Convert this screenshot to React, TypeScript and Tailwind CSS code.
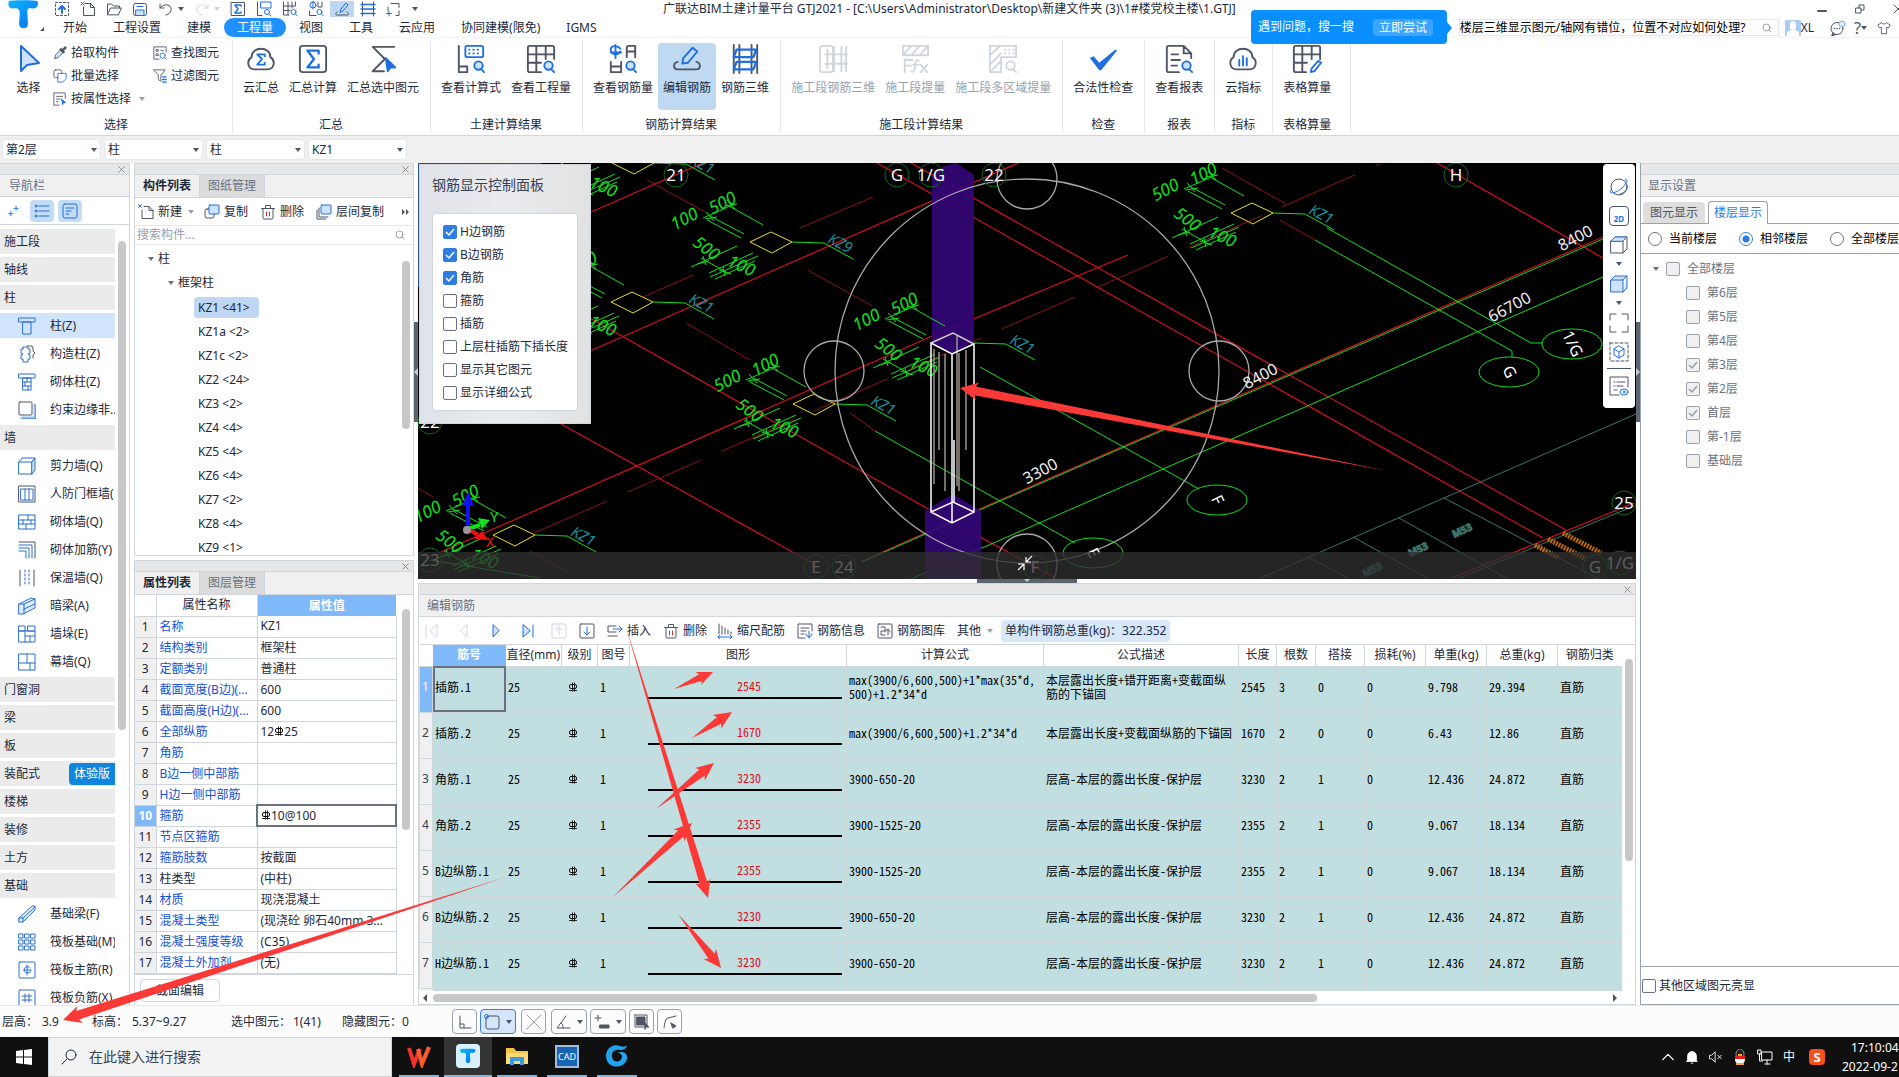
import React, { useState } from "react";

interface IconProps {
  size?: string;
  box?: number;
  color?: string;
  children: React.ReactNode;
}

const Icon: React.FC<IconProps> = ({ size = "w-4 h-4", box = 16, color = "text-[#4f5563]", children }) => (
  <svg
    className={`${size} ${color} shrink-0`}
    viewBox={`0 0 ${box} ${box}`}
    fill="none"
    stroke="currentColor"
    strokeWidth={box > 24 ? 2 : 1}
    strokeLinecap="round"
    strokeLinejoin="round"
  >
    {children}
  </svg>
);

const BLUE = "#1f6fe0";
const PALE = "#cfe2fb";

const Caret: React.FC<{ className?: string }> = ({ className = "text-gray-600" }) => (
  <svg className={`w-[6px] h-[4px] shrink-0 ${className}`} viewBox="0 0 6 4" fill="currentColor">
    <path d="M0 0h6L3 4z" />
  </svg>
);

const CloseX: React.FC = () => (
  <svg className="w-[7px] h-[7px]" viewBox="0 0 7 7" stroke="#8a8a8a" strokeWidth={1}>
    <path d="M0.5 0.5l6 6M6.5 0.5l-6 6" />
  </svg>
);

const RebarMark: React.FC = () => (
  <svg className="inline-block w-[10px] h-[10px] align-baseline" viewBox="0 0 10 10" fill="none" stroke="#111" strokeWidth={1}>
    <rect x="1.5" y="2.5" width="7" height="4" rx="1.5" />
    <path d="M4.5 0.5v9M6.500 0.5v9M1 8.500h8" strokeWidth={0.900} />
  </svg>
);

const TLogo: React.FC<{ className: string; id: string }> = ({ className, id }) => (
  <svg className={className} viewBox="0 0 30 28">
    <defs>
      <linearGradient id={id} x1="0" y1="0" x2="1" y2="1">
        <stop offset="0" stopColor="#12b4fa" />
        <stop offset="0.6" stopColor="#0a8cf5" />
        <stop offset="1" stopColor="#0868e8" />
      </linearGradient>
    </defs>
    <path
      d="M1 1C5 0 24 0 28 1C30 3 29 7 26 8C23 9 20 7 19 9C18 12 20 21 19 25C18 28 12 28 11 25C10 20 13 12 10 9C8 7 5 9 3 8C0 7 0 3 1 1Z"
      fill={`url(#${id})`}
    />
  </svg>
);

/* ---------- Title bar and menu ---------- */

const quickIcons: { id: string; label: string; active?: boolean; art: React.ReactNode }[] = [
  { id: "upload", label: "导入", art: (<><path strokeDasharray="2 2" d="M1.5 1.5h13v13h-13z" /><path stroke={BLUE} strokeWidth={2} d="M8 12V5M5 8l3-3 3 3" /></>) },
  { id: "new", label: "新建工程", art: (<><path d="M5 2.5h5.500l4 4v8h-11V6" /><path d="M10.500 2.500v4h4" /><path stroke={BLUE} d="M1 1l3 3M4 1L1 4" /></>) },
  { id: "open", label: "打开", art: <path d="M1.500 13.500V3h4l2 2h6v2M1.500 13.500L4.500 7h11l-3 6.500z" /> },
  { id: "save", label: "保存", art: (<><rect x="1.500" y="2.500" width="13" height="12" rx="2" /><path stroke={BLUE} fill={PALE} d="M4 9h8v5.500H4z" /><path stroke={BLUE} d="M5 5.500h6" /></>) },
];

const quickIconsMore: { id: string; label: string; active?: boolean; art: React.ReactNode }[] = [
  { id: "sum", label: "汇总", art: (<><rect x="1.500" y="1.500" width="13" height="13" /><path stroke={BLUE} strokeWidth={1.500} d="M11 5V4H5l3 4-3 4h6v-1" /></>) },
  { id: "formula", label: "计算式", art: (<><path d="M1.500 1v13.500H6" /><rect stroke={BLUE} x="5" y="1" width="10" height="6" /><circle stroke={BLUE} cx="11" cy="11" r="2.500" /><path stroke={BLUE} d="M13 13l2 2" /></>) },
  { id: "quantity", label: "工程量", art: (<><path d="M1.500 1v13H7M1.500 5h12V1M1.500 9.500H8M6 1v13M10 1v6" /><circle stroke={BLUE} cx="11.500" cy="11" r="2.500" /><path stroke={BLUE} d="M13.500 13l2 2" /></>) },
  { id: "rebar", label: "钢筋量", art: (<><circle stroke={BLUE} cx="5" cy="4" r="3" /><path stroke={BLUE} d="M5 0v8" /><path d="M1.500 10v4.500H8M10 1v5h4V1" /><circle stroke={BLUE} cx="11.500" cy="11" r="2.500" /><path stroke={BLUE} d="M13.500 13l2 2" /></>) },
  { id: "edit", label: "编辑", active: true, art: (<><path d="M3 11c-2 1-1.500 3 0 3h10c2 0 2-2 0-3" /><path stroke={BLUE} d="M6 11l1-3 5-6 2 2-5 6z" /></>) },
  { id: "three", label: "三维", art: (<><path d="M2.500 1v14M13.500 1v14" /><path stroke={BLUE} strokeWidth={1.500} d="M1 3.500h14M1 8h14M1 12.500h14" /></>) },
  { id: "crop", label: "框选", art: (<><path d="M5 2.500h8v4M13 10v4.500h-3M2 6v4" /><path stroke={BLUE} d="M0.500 12.500h5M3 10v5" /></>) },
];

const menus = ["开始", "工程设置", "建模", "工程量", "视图", "工具", "云应用", "协同建模(限免)", "IGMS"];

const Header: React.FC = () => {
  const [active, setActive] = useState("工程量");
  return (
    <header className="relative flex h-[38px] bg-white border-b border-gray-100 shrink-0">
      <button className="relative w-[50px] shrink-0" aria-label="主菜单">
        <TLogo className="absolute left-2 top-0 w-[31px] h-[29px]" id="logo-main" />
        <svg className="absolute right-1.5 bottom-1.5 w-1 h-1" viewBox="0 0 4 4" fill="#555">
          <path d="M4 0v4H0z" />
        </svg>
      </button>
      <div className="flex-1 min-w-0">
        <div className="flex h-[17px] items-center">
          <div className="flex items-center gap-2.5 pl-1 w-[613px] shrink-0">
            {quickIcons.map((q) => (
              <button key={q.id} aria-label={q.label}><Icon>{q.art}</Icon></button>
            ))}
            <button aria-label="撤销" className="flex items-center gap-1">
              <Icon><path d="M2 3v4h4M2 7c4-5 12-4 11 2-.5 3-2 4-5 5" /></Icon>
              <Caret />
            </button>
            <button aria-label="重做" className="flex items-center gap-1">
              <Icon color="text-gray-300"><path d="M14 3v4h-4M14 7C10 2 2 3 3 9c.5 3 2 4 5 5" /></Icon>
              <Caret className="text-gray-300" />
            </button>
            {quickIconsMore.map((q) => (
              <button key={q.id} aria-label={q.label} className={q.active ? "bg-[#bdd7f3] px-1 -mx-1" : ""}>
                <Icon>{q.art}</Icon>
              </button>
            ))}
            <button aria-label="更多"><Caret /></button>
          </div>
          <h1 className="leading-4 text-gray-800 whitespace-nowrap">
            广联达BIM土建计量平台 GTJ2021 - [C:\Users\Administrator\Desktop\新建文件夹 (3)\1#楼党校主楼\1.GTJ]
          </h1>
          <div className="ml-auto flex items-center gap-7 text-gray-600">
            <button aria-label="最小化"><Icon size="w-2.5 h-2.5" box={10}><path strokeWidth={2} d="M1 7h8" /></Icon></button>
            <button aria-label="还原"><Icon size="w-2.5 h-2.5" box={10}><path d="M1 4h5v5H1zM4 4V1h5v5H6" /></Icon></button>
            <button aria-label="关闭" className="w-1.5 overflow-hidden"><Icon size="w-2.5 h-2.5" box={10}><path d="M1 1l8 8M9 1L1 9" /></Icon></button>
          </div>
        </div>
        <div className="flex h-[21px] items-center">
          <nav className="flex">
            {menus.map((m) => (
              <button
                key={m}
                onClick={() => setActive(m)}
                className={`h-[19px] px-[13px] leading-[19px] rounded-full ${
                  m === active ? "bg-[#1e90ff] text-white" : "text-gray-800"
                }`}
              >
                {m}
              </button>
            ))}
          </nav>
          <div className="ml-auto flex items-center">
            <div className="flex items-center w-[320px] h-[17px] border border-gray-200 bg-white pr-1.5">
              <input
                aria-label="搜索帮助"
                className="flex-1 min-w-0 text-black outline-none"
                defaultValue="楼层三维显示图元/轴网有错位，位置不对应如何处理?"
              />
              <Icon size="w-2.5 h-2.5" box={10} color="text-gray-400"><circle cx="4.500" cy="4.500" r="3.500" /><path d="M7 7l2 2" /></Icon>
            </div>
            <button className="flex items-center ml-1.5">
              <svg className="w-4 h-4" viewBox="0 0 16 16">
                <rect width="16" height="16" fill="#a9cdf5" />
                <path d="M5 4c0-4 6-4 6 0v4l-1 2 4 2v4H2v-4l4-2-1-2z" fill="#fff" />
              </svg>
              XL
            </button>
            <button aria-label="消息" className="ml-4">
              <Icon size="w-4 h-4"><circle cx="7" cy="8.500" r="6" /><path d="M4.500 8.500h.1M7 8.500h.1M9.500 8.500h.1M3 13l-1 2.500 3-1" strokeWidth={1.500} /><circle cx="12" cy="4" r="3" stroke="#7fb3ee" fill="#dbeafe" /></Icon>
            </button>
            <button aria-label="帮助" className="ml-2 flex items-center text-[16px] leading-4 text-gray-600">?<Caret /></button>
            <button aria-label="皮肤" className="ml-2.5 mr-2">
              <Icon size="w-3.5 h-3.5"><path d="M5 2L1 4.500 3 8l2-1v7.500h6V7l2 1 2-3.500L11 2C10 4 6 4 5 2z" /></Icon>
            </button>
          </div>
        </div>
      </div>
      <div className="absolute z-10 right-[452px] top-[10px] w-[196px] h-[34px] rounded bg-[#0a8fff] flex items-center justify-between pl-[7px] pr-[14px] text-white">
        遇到问题，搜一搜
        <button className="bg-[#3ba5ff] rounded-sm w-[60px] h-[17px] leading-[17px]">立即尝试</button>
        <svg className="absolute left-full top-3 w-[5px] h-3" viewBox="0 0 5 12" fill="#0a8fff"><path d="M0 0l5 6-5 6z" /></svg>
      </div>
    </header>
  );
};

/* ---------- Ribbon ---------- */

const magnifier = (
  <g stroke={BLUE}><circle cx="24" cy="23" r="4.500" fill={PALE} /><path d="M27 27l3 3" /></g>
);

const art: Record<string, React.ReactNode> = {
  cloudSum: (<><path d="M9 27C2 27 0 18 6 14C6 2 26 2 26 14C32 18 30 27 23 27Z" /><path stroke={BLUE} d="M20 13v-2h-8l5 5-5 6h8v-2" /></>),
  sum: (<><rect x="2" y="2" width="28" height="28" rx="3" /><path stroke={BLUE} strokeWidth={2.500} d="M22 10V7H10l7 9-7 9h12v-3" /></>),
  sumSelect: (<><path d="M28 3H5l13 13L5 29h12" /><path d="M19 15l10 10h-5l-3 4z" fill={BLUE} stroke={BLUE} /></>),
  formula: (<><path d="M3 2v28h9v-6H3" /><rect stroke={BLUE} x="10" y="2" width="19" height="12" rx="2" /><path stroke={BLUE} strokeDasharray="0.500 4" d="M14 6h12M14 10h12" />{magnifier}</>),
  quantity: (<><path d="M16 30H4c-1 0-2-1-2-2V4c0-1 1-2 2-2h24c1 0 2 1 2 2v12M2 11h28M2 20h14M11 2v28M21 2v14" />{magnifier}</>),
  rebar: (<><path stroke={BLUE} d="M13 5C9 0 2 2 3 7s8 5 10 1M8 1v14M3 9h11" /><path d="M20 14V4c0-1 1-2 2-2h7v12M20 8h9M3 19v11h11M3 24h11M14 19v11" />{magnifier}</>),
  edit: (<><path d="M6 19c-5 1-5 8 0 8h20c5 0 5-7 0-8" /><path stroke={BLUE} d="M11 21l1-6L22 4l5 4-10 12z" /></>),
  three: (<><path d="M4 1v30M10 1v30M23 1v30M29 1v30" /><path stroke={BLUE} strokeWidth={2.500} d="M7 6h21l-3 8H4zM7 19h21l-3 8H4z" /></>),
  segThree: (<><rect x="2" y="2" width="14" height="28" rx="3" /><path d="M10 6v20M17 3v26M25 3v26M30 3v26M8 11h23M8 21h23" /></>),
  segLift: (<><path d="M3 2h27v10H3zM3 12l9-10M12 12l9-10M21 12l8-9M5 16v14M5 17h8M5 23h7" /><path d="M20 18c-3-2-4 2-4 6s-2 7-4 5M14 22h6M22 22l7 8M29 22l-7 8" /></>),
  segArea: (<><path d="M2 2h28v12H14v16H2zM2 12L13 2M2 22l12-12M2 30l12-12" /><path strokeDasharray="0.500 4" d="M18 6h10M18 10h10" /><circle cx="24" cy="23" r="4.500" /><path d="M27 27l3 3" /></>),
  check: <path fill={BLUE} stroke="none" d="M2 15l4-2 6 7L29 6l2 1L14 28h-2z" />,
  report: (<><path d="M16 30H5c-1 0-2-1-2-2V4c0-1 1-2 2-2h16l8 8v5M21 2v8h8M8 11h7M8 17h9M8 23h6" />{magnifier}</>),
  cloudIndex: (<><path d="M9 27C2 27 0 18 6 14C6 2 26 2 26 14C32 18 30 27 23 27Z" /><path stroke={BLUE} d="M12 17v6M16 13v10M20 15v8" /></>),
  table: (<><path d="M15 30H4c-1 0-2-1-2-2V4c0-1 1-2 2-2h24c1 0 2 1 2 2v12M2 11h28M2 20h14M11 2v28M21 2v14" /><path stroke={BLUE} d="M20 30l1-4 7-8 3 2-7 9z" /></>),
};

interface RibbonGroup {
  title: string;
  items: { label: string; art: string; active?: boolean; disabled?: boolean }[];
}

const ribbon: RibbonGroup[] = [
  { title: "汇总", items: [{ label: "云汇总", art: "cloudSum" }, { label: "汇总计算", art: "sum" }, { label: "汇总选中图元", art: "sumSelect" }] },
  { title: "土建计算结果", items: [{ label: "查看计算式", art: "formula" }, { label: "查看工程量", art: "quantity" }] },
  { title: "钢筋计算结果", items: [{ label: "查看钢筋量", art: "rebar" }, { label: "编辑钢筋", art: "edit", active: true }, { label: "钢筋三维", art: "three" }] },
  {
    title: "施工段计算结果",
    items: [
      { label: "施工段钢筋三维", art: "segThree", disabled: true },
      { label: "施工段提量", art: "segLift", disabled: true },
      { label: "施工段多区域提量", art: "segArea", disabled: true },
    ],
  },
  { title: "检查", items: [{ label: "合法性检查", art: "check" }] },
  { title: "报表", items: [{ label: "查看报表", art: "report" }] },
  { title: "指标", items: [{ label: "云指标", art: "cloudIndex" }] },
  { title: "表格算量", items: [{ label: "表格算量", art: "table" }] },
];

const Ribbon: React.FC = () => (
  <section className="flex h-[98px] bg-white border-b border-gray-300 shrink-0 pt-[2px] pb-[2px]">
    <div className="w-[233px] border-r border-gray-200 flex flex-col shrink-0">
      <div className="flex flex-1">
        <button className="w-[53px] pl-1 flex flex-col items-center shrink-0">
          <Icon size="w-8 h-8 mt-[3px]" box={32} color="text-[#1f6fe0]"><path fill={PALE} d="M8 3v25l6-6 12-2z" /></Icon>
          <span className="mt-[5px] leading-4">选择</span>
        </button>
        <div className="flex flex-col gap-[5px] pt-1">
          <button className="flex items-center gap-1 leading-[18px]">
            <Icon size="w-3.5 h-3.5"><path d="M2 14l1-4 6-6 3 3-6 6z" fill={PALE} /><path strokeWidth={3} d="M9 4l3 3M11 5l3-3" /></Icon>拾取构件
          </button>
          <button className="flex items-center gap-1 leading-[18px]">
            <Icon size="w-3.5 h-3.5"><rect x="1" y="1" width="9" height="9" rx="2" /><path stroke={BLUE} fill="#fff" d="M6 5h9v6l-4 4H6z" /></Icon>批量选择
          </button>
          <button className="flex items-center gap-1 leading-[18px]">
            <Icon size="w-3.5 h-3.5"><path d="M7 15H1V1h13v6M4 5h7M4 8h4M4 11h2" /><path fill={BLUE} stroke="none" d="M9 7l6 5-3 1-1 3z" /></Icon>按属性选择
            <Caret className="text-gray-400 ml-1" />
          </button>
        </div>
        <div className="flex flex-col gap-[5px] pt-1 ml-2">
          <button className="flex items-center gap-1 leading-[18px]">
            <Icon size="w-3.5 h-3.5"><path d="M7 15H1V1h14v6M4 4h2v2H4zM9 5h3M4 9h2v2H4z" /><circle stroke={BLUE} cx="11" cy="11" r="3" /><path stroke={BLUE} d="M13 13l2 2" /></Icon>查找图元
          </button>
          <button className="flex items-center gap-1 leading-[18px]">
            <Icon size="w-3.5 h-3.5"><path d="M1 1h13L9 7v7l-3-2V7z" /><path stroke={BLUE} strokeWidth={1.500} d="M11 9h4M11 12h4M11 15h4" /></Icon>过滤图元
          </button>
        </div>
      </div>
      <div className="text-center leading-4">选择</div>
    </div>
    {ribbon.map((g) => (
      <div key={g.title} className="flex flex-col border-r border-gray-200 pl-[5px] pr-1.5 last:pr-3.5 shrink-0">
        <div className="flex flex-1 pt-[3px]">
          {g.items.map((it) => (
            <button
              key={it.label}
              disabled={it.disabled}
              className={`flex flex-col items-center h-[67px] px-[5px] rounded-sm ${it.active ? "bg-[#bfd9f3]" : ""} ${
                it.disabled ? "text-gray-400" : ""
              }`}
            >
              <Icon size="w-[30px] h-[30px] mt-[1px]" box={32} color={it.disabled ? "text-gray-300" : "text-[#4f5563]"}>
                {art[it.art]}
              </Icon>
              <span className="mt-[6px] leading-4 whitespace-nowrap">{it.label}</span>
            </button>
          ))}
        </div>
        <div className="text-center leading-4">{g.title}</div>
      </div>
    ))}
  </section>
);

const combos = [
  { label: "楼层", value: "第2层" },
  { label: "构件大类", value: "柱" },
  { label: "构件类型", value: "柱" },
  { label: "构件", value: "KZ1" },
];

const ComboBar: React.FC = () => (
  <div className="flex items-center gap-[3px] h-[27px] pl-[2px] bg-[#f0f0f0] shrink-0">
    {combos.map((c) => (
      <div key={c.label} className="relative w-[99px]">
        <select aria-label={c.label} className="w-full h-[21px] pl-[3px] appearance-none bg-white border border-gray-200 rounded-sm text-gray-800">
          <option>{c.value}</option>
        </select>
        <span className="absolute right-1 top-[9px] pointer-events-none flex"><Caret /></span>
      </div>
    ))}
  </div>
);

/* ---------- Navigation ---------- */

const navArt: Record<string, React.ReactNode> = {
  column: <path d="M1 1h16v4H1zM5 5h8v12H5z" />,
  ties: (<><path d="M5 2h5v2h2v4l-2 1 2 1v4h-2v3H5v-3H3v-4l2-1-2-1V4h2z" /><path stroke="#4f5563" d="M9 1h5l1 2v3l2 2-2 2v3" /></>),
  brickColumn: <path d="M1 1h16v4H1zM5 5h8v12H5zM5 9h8M5 13h8M9 5v4M7 9v4M10 13v4" />,
  edge: (<><path d="M17 4v13H4" strokeWidth={3} stroke="#9cc3f5" /><path d="M18 4v14H4" /><rect x="1" y="1" width="13" height="13" rx="1" fill="#fff" stroke="#4f5563" /></>),
  box: (<><path d="M1 5h13v12H1zM1 5l3-4h13l-3 4" /><path fill={PALE} d="M14 5l3-4v12l-3 4z" /></>),
  doors: (<><rect x="1" y="1" width="16" height="16" stroke="#4f5563" /><path d="M3 4h12v11H3zM7 4v11M11 4v11" /></>),
  brick: <path d="M1 2h16v14H1zM1 7h16M1 11h16M10 2v5M5 7v4M13 7v4M8 11v5" />,
  bend: (<><path d="M1 1h16v16" stroke="#4f5563" /><path d="M1 4h13v13M1 7h10v10M1 10h7v7" /></>),
  insulation: (<><path d="M2 1v16M16 1v16" stroke="#4f5563" /><path d="M7 1v16M11 1v16" strokeDasharray="2 2" /></>),
  hidden: <path fill="#dcebfd" d="M1 7l12-6 4 1v9L5 17H1zM1 7h5v10M6 7l11-5M6 12l11-5" />,
  pier: <path d="M1 1h6v5H1zM10 1h7v5h-7zM1 6h16v11H1zM7 6v11M7 11h10M12 11v6" />,
  curtain: <path d="M1 1h16v16H1zM9 1v9M1 10h16M12 10v7" />,
  beam: <path fill="#dcebfd" d="M1 13L14 1h3v4L5 17H1zM1 13h4v4M5 13L17 2" />,
  raft: <path d="M1 1h4v4H1zM7 1h4v4H7zM13 1h4v4h-4zM1 7h4v4H1zM7 7h4v4H7zM13 7h4v4h-4zM1 13h4v4H1zM7 13h4v4H7zM13 13h4v4h-4z" />,
  mainBar: (<><rect x="1" y="1" width="16" height="16" rx="1" /><path d="M12 7c-2-3-6-1-6 2s5 4 7 1M9 4v10M6 9h7" /></>),
  negBar: (<><rect x="1" y="1" width="16" height="16" rx="1" /><path d="M4 7h10M4 11h10M7 5v8M11 5v8" /></>),
};

const navItems: { label: string; icon?: string; badge?: string }[] = [
  { label: "施工段" },
  { label: "轴线" },
  { label: "柱" },
  { label: "柱(Z)", icon: "column" },
  { label: "构造柱(Z)", icon: "ties" },
  { label: "砌体柱(Z)", icon: "brickColumn" },
  { label: "约束边缘非..", icon: "edge" },
  { label: "墙" },
  { label: "剪力墙(Q)", icon: "box" },
  { label: "人防门框墙(", icon: "doors" },
  { label: "砌体墙(Q)", icon: "brick" },
  { label: "砌体加筋(Y)", icon: "bend" },
  { label: "保温墙(Q)", icon: "insulation" },
  { label: "暗梁(A)", icon: "hidden" },
  { label: "墙垛(E)", icon: "pier" },
  { label: "幕墙(Q)", icon: "curtain" },
  { label: "门窗洞" },
  { label: "梁" },
  { label: "板" },
  { label: "装配式", badge: "体验版" },
  { label: "楼梯" },
  { label: "装修" },
  { label: "土方" },
  { label: "基础" },
  { label: "基础梁(F)", icon: "beam" },
  { label: "筏板基础(M)", icon: "raft" },
  { label: "筏板主筋(R)", icon: "mainBar" },
  { label: "筏板负筋(X)", icon: "negBar" },
];

const PanelStrip: React.FC<{ closable?: boolean }> = ({ closable = true }) => (
  <div className="h-3 shrink-0 bg-[#e7e7e7] border-y border-gray-300 flex items-center justify-end pr-1">
    {closable && <button aria-label="关闭面板"><CloseX /></button>}
  </div>
);

const NavPanel: React.FC = () => {
  const [selected, setSelected] = useState("柱(Z)");
  return (
    <aside className="w-[130px] shrink-0 flex flex-col border-r border-gray-300 bg-white overflow-hidden">
      <PanelStrip />
      <h2 className="h-[22px] shrink-0 bg-[#f0f0f0] border-b border-gray-300 pl-[9px] leading-[21px] text-gray-500">导航栏</h2>
      <div className="flex items-center gap-1 h-7 shrink-0 border-b border-gray-300 pl-1.5">
        <button aria-label="添加" className="w-5 h-[22px] flex items-center">
          <Icon size="w-3.5 h-3.5" color="text-[#1f6fe0]"><path d="M3 11h5M5.500 8.500v5M9 5h5M11.500 2.500v5" /></Icon>
        </button>
        <button aria-label="列表" className="w-6 h-[22px] rounded bg-[#c4dcf5] flex items-center justify-center">
          <Icon color="text-[#1f6fe0]"><circle cx="2" cy="3" r="1" /><circle cx="2" cy="8" r="1" /><circle cx="2" cy="13" r="1" /><path d="M5 3h10M5 8h10M5 13h10" /></Icon>
        </button>
        <button aria-label="详情" className="w-6 h-[22px] rounded bg-[#c4dcf5] flex items-center justify-center">
          <Icon color="text-[#1f6fe0]"><rect x="1" y="1" width="14" height="14" rx="2" /><path d="M4 5h8M4 8h5M4 11h3" /></Icon>
        </button>
      </div>
      <div className="flex flex-1 min-h-0 pt-1">
        <ul className="flex-1 min-w-0 flex flex-col gap-[3px] overflow-hidden">
          {navItems.map((n) => (
            <li key={n.label} className="shrink-0">
              <button
                onClick={() => setSelected(n.label)}
                className={`w-full h-[25px] flex items-center overflow-hidden whitespace-nowrap text-left ${
                  n.icon ? "pl-[18px] gap-3.5" : "pl-1 bg-[#ebebeb] justify-between"
                } ${selected === n.label ? "bg-[#d0e5fb]" : ""}`}
              >
                {n.icon && <Icon size="w-[18px] h-[18px]" box={18} color="text-[#2a6ec9]">{navArt[n.icon]}</Icon>}
                {n.label}
                {n.badge && <span className="bg-[#0f85dd] text-white rounded-l-sm px-[5px] h-[22px] leading-[22px]">{n.badge}</span>}
              </button>
            </li>
          ))}
        </ul>
        <div className="w-[14px] shrink-0 pl-[3px] pt-3">
          <div className="w-2 h-[64%] rounded-full bg-[#c8c8c8]" />
        </div>
      </div>
    </aside>
  );
};

/* ---------- Component list and properties ---------- */

const components = ["KZ1 <41>", "KZ1a <2>", "KZ1c <2>", "KZ2 <24>", "KZ3 <2>", "KZ4 <4>", "KZ5 <4>", "KZ6 <4>", "KZ7 <2>", "KZ8 <4>", "KZ9 <1>"];

const PanelTabs: React.FC<{ tabs: string[] }> = ({ tabs }) => (
  <div className="flex h-[23px] shrink-0 bg-[#f0f0f0] border-b border-gray-300">
    {tabs.map((t, i) => (
      <button key={t} className={`w-16 leading-[22px] last:w-[66px] ${i === 0 ? "font-bold text-gray-800" : "bg-[#dcdcdc] border-x border-gray-300 text-gray-500"}`}>
        {t}
      </button>
    ))}
  </div>
);

const ComponentPanel: React.FC = () => {
  const [current, setCurrent] = useState("KZ1 <41>");
  return (
    <section className="h-[393px] shrink-0 flex flex-col bg-white border border-t-0 border-gray-300 overflow-hidden">
      <PanelStrip />
      <PanelTabs tabs={["构件列表", "图纸管理"]} />
      <div className="flex items-center h-7 shrink-0 border-b border-gray-200 pl-[3px] whitespace-nowrap">
        <button className="flex items-center gap-1">
          <Icon><path d="M6 2.500h5l4 4v8H4V6M11 2.500v4h4" /><path stroke={BLUE} d="M0.500 0.500l3 3M3.500 0.500l-3 3" /></Icon>新建
        </button>
        <Caret className="text-gray-400 ml-1.5" />
        <button className="flex items-center gap-1 ml-2.5">
          <Icon><rect x="1" y="5" width="9" height="9" rx="2" /><rect x="5" y="1" width="10" height="9" rx="1" fill={PALE} stroke={BLUE} /></Icon>复制
        </button>
        <button className="flex items-center gap-1 ml-3">
          <Icon><path d="M1.500 4.500h13M3 5v9c0 1 1 1 1 1h8s1 0 1-1V5M5.500 4V1.500h5V4" /><path stroke="#d0302a" d="M6.500 8v4M9.500 8v4" /></Icon>删除
        </button>
        <button className="flex items-center gap-1 ml-3">
          <Icon><path d="M1 6v9h9M3 4v9h9" /><rect x="5" y="1" width="10" height="9" rx="1" fill={PALE} stroke={BLUE} /></Icon>层间复制
        </button>
        <button aria-label="更多" className="ml-auto mr-[3px]">
          <svg className="w-2 h-1.5" viewBox="0 0 8 6" fill="#555"><path d="M0 0l3 3-3 3zM4 0l3 3-3 3z" /></svg>
        </button>
      </div>
      <div className="flex items-center h-[19px] shrink-0 border-b border-gray-200 pl-0.5 pr-2">
        <input aria-label="搜索构件" placeholder="搜索构件..." className="flex-1 min-w-0 outline-none placeholder:text-gray-400" />
        <Icon size="w-2.5 h-2.5" box={10} color="text-gray-400"><circle cx="4.500" cy="4.500" r="3.500" /><path d="M7 7l2 2" /></Icon>
      </div>
      <div className="flex flex-1 min-h-0">
        <ul className="flex-1 pt-[2px] leading-6">
          <li className="pl-[13px] h-6 flex items-center gap-1"><Caret className="text-gray-500" />柱</li>
          <li className="pl-[33px] h-6 flex items-center gap-1"><Caret className="text-gray-500" />框架柱</li>
          {components.map((c) => (
            <li key={c} className="pl-[59px] h-6 flex items-center">
              <button onClick={() => setCurrent(c)} className={`h-[21px] leading-[21px] px-1 rounded-sm [word-spacing:normal] ${c === current ? "bg-[#bfd7f2] pr-[9px]" : ""}`}>
                {c}
              </button>
            </li>
          ))}
        </ul>
        <div className="w-[11px] shrink-0 pt-4"><div className="w-2 h-[168px] rounded-full bg-[#c8c8c8]" /></div>
      </div>
    </section>
  );
};

const properties: { name: string; value?: React.ReactNode; plain?: boolean }[] = [
  { name: "名称", value: "KZ1" },
  { name: "结构类别", value: "框架柱" },
  { name: "定额类别", value: "普通柱" },
  { name: "截面宽度(B边)(...", value: "600" },
  { name: "截面高度(H边)(...", value: "600" },
  { name: "全部纵筋", value: <>12<RebarMark />25</> },
  { name: "角筋" },
  { name: "B边一侧中部筋" },
  { name: "H边一侧中部筋" },
  { name: "箍筋", value: <><RebarMark />10@100</> },
  { name: "节点区箍筋" },
  { name: "箍筋肢数", value: "按截面" },
  { name: "柱类型", value: "(中柱)", plain: true },
  { name: "材质", value: "现浇混凝土" },
  { name: "混凝土类型", value: "(现浇砼 卵石40mm 3..." },
  { name: "混凝土强度等级", value: "(C35)" },
  { name: "混凝土外加剂", value: "(无)" },
];

const PropertyPanel: React.FC = () => (
  <section className="flex-1 min-h-0 mt-1 flex flex-col bg-white border-x border-gray-300 overflow-hidden">
    <PanelStrip />
    <PanelTabs tabs={["属性列表", "图层管理"]} />
    <div className="flex h-[380px] shrink-0 overflow-hidden border-b border-gray-300">
      <table className="w-[262px] table-fixed border-collapse self-start whitespace-nowrap">
        <colgroup><col className="w-[21px]" /><col className="w-[101px]" /><col /></colgroup>
        <thead>
          <tr className="h-[21px]">
            <th className="border-r border-b border-gray-300" />
            <th className="border-r border-b border-gray-300 font-normal">属性名称</th>
            <th className="bg-[#7fb9f9] text-white font-bold">属性值</th>
          </tr>
        </thead>
        <tbody>
          {properties.map((p, i) => (
            <tr key={p.name} className="h-[21px]">
              <td className={`border-r border-b border-gray-300 p-0 text-center ${i === 9 ? "bg-[#7fb9f9] text-white font-bold" : "bg-[#f0f0f0]"}`}>{i + 1}</td>
              <td className={`border-r border-b border-gray-300 p-0 pl-[3px] overflow-hidden ${p.plain ? "" : "text-[#1450d8]"}`}>{p.name}</td>
              <td className={`p-0 pl-[3px] overflow-hidden ${i === 9 ? "border-2 border-gray-500" : "border-r border-b border-gray-300"}`}>{p.value}</td>
            </tr>
          ))}
        </tbody>
      </table>
      <div className="ml-auto pt-3.5 pr-[3px]"><div className="w-2 h-[221px] rounded-full bg-[#c8c8c8]" /></div>
    </div>
    <button className="ml-[5px] mt-1 w-20 h-[23px] shrink-0 border border-gray-300 rounded bg-white">截面编辑</button>
  </section>
);

/* ---------- 3D view ---------- */

const G = "#10e020";
const R = "#d01020";
const DR = "#8c1018";

const DimCluster: React.FC<{ x: number; y: number; a: string; b: string }> = ({ x, y, a, b }) => (
  <g transform={`translate(${x} ${y})`} stroke={G} strokeWidth={1} fill="none">
    <path d="M-68-24L-36-38M-61-26l34 18M-64-22l34 18M-42-36l34 19M-65-30l8 9M-66-23l12-2M-44-42l8 9M-46-36l12-2" />
    <path d="M-80 25l46-21M-61 35l48-21M-56 37l40-18M-62 31l44-20M-70 16l25 14M-74 22l12-3M-68 14l3 9M-52 28l12 4M-48 25l2 9" />
    <g fill={G} stroke="none" fontSize="17" fontStyle="italic" textAnchor="middle">
      <text transform="translate(-46 -34) rotate(-28)">{a}</text>
      <text transform="translate(-84 -18) rotate(-28)">{b}</text>
      <text transform="translate(-68 11) rotate(36)">500</text>
      <text transform="translate(-32 29) rotate(24)">100</text>
    </g>
  </g>
);

const ColumnMark: React.FC<{ x: number; y: number; name: string; hollow?: boolean; a?: string; b?: string }> = ({ x, y, name, hollow, a = "500", b = "100" }) => (
  <g>
    <DimCluster x={x} y={y} a={a} b={b} />
    {!hollow && <path d={`M${x - 21} ${y}l21-10 21 10-20 11z`} stroke="#e8e020" fill="none" />}
    <path d={`M${x + 21} ${y}l32 1 29 16`} stroke={G} fill="none" />
    <text transform={`translate(${x + 56} ${y}) rotate(28)`} fill="#1c8f9c" fontSize="15" fontStyle="italic">{name}</text>
  </g>
);

const axisLabels = [
  { t: "21", x: 676, y: 175 }, { t: "G", x: 897, y: 175 }, { t: "1/G", x: 931, y: 175 }, { t: "22", x: 994, y: 175 },
  { t: "H", x: 1456, y: 175 }, { t: "25", x: 1624, y: 503 }, { t: "23", x: 430, y: 560 }, { t: "24", x: 844, y: 567 },
  { t: "E", x: 816, y: 567 }, { t: "F", x: 1035, y: 567 }, { t: "G", x: 1595, y: 567 }, { t: "1/G", x: 1620, y: 563 }, { t: "22", x: 430, y: 422 },
];

const dims = [
  { t: "8400", x: 1578, y: 243 }, { t: "66700", x: 1512, y: 312 }, { t: "8400", x: 1263, y: 381 }, { t: "3300", x: 1043, y: 476 },
];

const bubbles = [
  { t: "1/G", x: 1572, y: 344 }, { t: "G", x: 1509, y: 372 }, { t: "F", x: 1217, y: 500 }, { t: "E", x: 1093, y: 553 },
];

const Scene: React.FC = () => (
  <svg className="absolute inset-0 w-full h-full" viewBox="418 163 1218 416" preserveAspectRatio="xMidYMid slice" fontFamily="Noto Sans, sans-serif">
    <rect x="418" y="163" width="1218" height="416" fill="#000" />
    <path d="M418 163h124l-8 4H420v120h-2z" fill="#28508c" />
    <g stroke={DR} fill="none">
      <path d="M534 533L1380 164" strokeDasharray="80 22" />
      <path d="M800 228l73-31M643 297l50-22M647 180l58 32M808 270l64 36M686 323l64 37M418 488l15 9M1222 168l64 36M1280 220l35 20M850 413l25 18M530 551l40 22" />
    </g>
    <g stroke={R} fill="none" strokeWidth={1.200}>
      <path d="M591 212l112-49M590 351L1018 163M441 552L930 337L1128 255" />
      <path d="M590 318L930 510L1054 577M561 424L816 565" />
      <path d="M877 163L1543 538M911 163L1566 530M1437 163L1603 258" />
      <path d="M1452 578L1634 503M862 561L1000 500L1603 237" />
    </g>
    <path d="M862 562L1000 501L1603 239M911 579L1603 277" stroke={G} fill="none" />
    <path d="M875 431L1075 543M980 367L1199 489M1315 240L1512 351v6M1327 228L1531 343h11M430 560l110 18" stroke={G} fill="none" />
    <g stroke="#3c7468" fill="none">
      <path d="M1636 414L1261 578M1444 498l153 80M1399 518l107 60M1353 537l74 41M1308 557l40 21M1460 578l174-72" />
    </g>
    <g fill="#3c7468" stroke="#3c7468" fontSize="10" fontWeight="bold">
      <text transform="translate(1454 538) rotate(-24)">M53</text>
      <text transform="translate(1410 557) rotate(-24)">M53</text>
      <text transform="translate(1364 577) rotate(-24)">M53</text>
    </g>
    <path d="M1563 533l38 20M1548 539l38 20M1535 545l24 13" stroke="#b8660c" strokeWidth={5} strokeDasharray="2 1" />

    <ColumnMark x={633} y={163} name="KZ1" />
    <ColumnMark x={771} y={242} name="KZ9" />
    <ColumnMark x={632} y={302} name="KZ1" />
    <ColumnMark x={814} y={404} name="KZ1" a="100" b="500" />
    <ColumnMark x={514} y={535} name="KZ1" />
    <ColumnMark x={1252} y={213} name="KZ1" a="100" b="500" />

    <path d="M932 176l12-10 12-3 18 12v169l-22 11-20-12z" fill="#34067a" fillOpacity="0.900" />
    <path d="M925 511l28-17 28 17v68h-56z" fill="#34067a" fillOpacity="0.900" />
    <ColumnMark x={953} y={343} name="KZ1" hollow />
    <g stroke="#9a938c" strokeWidth={1.500}>
      <path d="M939 352v98M945 354v137M934 349v135M959 353v138M966 350v100M957 336v150" />
    </g>
    <g stroke="#fff" strokeWidth={1.500} fill="none">
      <path d="M931 343v169l21 11 22-11V344l-22 10zM952 354v169M931 512l22-10 21 10" />
      <path d="M931 343l22-10 21 11" stroke="#d9c7c7" />
      <path d="M954 440v62" />
    </g>

    <g stroke="#a8a8a8" fill="none" strokeWidth={1.300}>
      <circle cx="1027" cy="371" r="192" />
      <circle cx="834" cy="371" r="30" />
      <circle cx="1219" cy="371" r="30" />
      <circle cx="1027" cy="179" r="30" />
      <circle cx="1027" cy="564" r="30" />
    </g>

    {bubbles.map((b) => (
      <g key={b.x}>
        <ellipse cx={b.x} cy={b.y} rx="30" ry="15" stroke={G} fill="none" />
        <text transform={`translate(${b.x} ${b.y}) rotate(64)`} textAnchor="middle" y="5" fill="#fff" fontSize="16">{b.t}</text>
      </g>
    ))}
    {dims.map((d) => (
      <text key={d.x} transform={`translate(${d.x} ${d.y}) rotate(-28)`} textAnchor="middle" fill="#eee" fontSize="16">{d.t}</text>
    ))}
    {axisLabels.map((a) => (
      <g key={`${a.t}${a.x}`}>
        <circle cx={a.x} cy={a.y} r="12" stroke="#0f6a1a" fill="none" />
        <text x={a.x} y={a.y + 6} textAnchor="middle" fill="#f4f4f4" fontSize="17">{a.t}</text>
      </g>
    ))}

    <g strokeWidth={4}>
      <path d="M468 527v-30" stroke="#1010f0" /><path d="M462 506l6-14 6 14z" fill="#1010f0" />
      <path d="M468 529l12-4" stroke="#10e020" /><path d="M478 518l12 2-8 9z" fill="#10e020" />
      <path d="M468 529l10 6" stroke="#f01010" /><path d="M474 539l14 1-6-9z" fill="#f01010" />
      <circle cx="467" cy="530" r="4" fill="#999" />
    </g>
    <text x="490" y="522" fill={G} fontSize="15">Y</text>
    <text x="486" y="547" fill="#f01010" fontSize="14">X</text>

    <rect x="418" y="552" width="1218" height="27" fill="#303030" fillOpacity="0.780" />
    <path d="M1018 570l6-6M1018 564h6v6M1032 556l-6 6M1026 557v5h5" stroke="#fff" fill="none" strokeWidth={1.200} />
  </svg>
);

const displayOptions = [
  { label: "H边钢筋", on: true },
  { label: "B边钢筋", on: true },
  { label: "角筋", on: true },
  { label: "箍筋" },
  { label: "插筋" },
  { label: "上层柱插筋下插长度" },
  { label: "显示其它图元" },
  { label: "显示详细公式" },
];

const CheckBox: React.FC<{ on?: boolean; tone?: "blue" | "muted" }> = ({ on, tone = "blue" }) => (
  <span className="relative flex w-3.5 h-3.5 shrink-0">
    <input
      type="checkbox"
      defaultChecked={on}
      disabled={tone === "muted"}
      className={`peer appearance-none w-3.5 h-3.5 border rounded-xs ${
        tone === "muted" ? "bg-[#f0f0f0] border-gray-400" : "bg-white border-gray-500 checked:bg-[#2f7de0] checked:border-[#2f7de0]"
      }`}
    />
    <svg
      className={`absolute inset-0 w-3.5 h-3.5 pointer-events-none hidden peer-checked:block ${tone === "muted" ? "text-gray-400" : "text-white"}`}
      viewBox="0 0 14 14"
      fill="none"
      stroke="currentColor"
      strokeWidth={1.500}
    >
      <path d="M3 7l3 3 5-6" />
    </svg>
  </span>
);

const DisplayDialog: React.FC = () => (
  <div className="absolute left-px top-px w-[172px] pt-3 px-3 pb-3 bg-linear-to-r from-[#dfe2e8] via-[#e9ebee] to-[#e2e2e2] border border-gray-300">
    <h3 className="text-[14px] leading-4 text-gray-700">钢筋显示控制面板</h3>
    <div className="mt-5 bg-white border border-gray-300 rounded-sm pl-2.5 py-1.5">
      {displayOptions.map((o) => (
        <label key={o.label} className="flex items-center gap-[3px] h-[23px] whitespace-nowrap">
          <CheckBox on={o.on} />
          {o.label}
        </label>
      ))}
    </div>
  </div>
);

const cube = "M2 6h12v12H2zM2 6l4-4h12l-4 4M18 2v12l-4 4";

const ViewTools: React.FC = () => {
  const tool = "h-[29px] flex items-center justify-center";
  return (
    <div className="absolute right-[1px] top-[1px] w-8 h-[244px] pt-2 bg-white rounded flex flex-col">
      <button aria-label="动态观察" className={tool}>
        <Icon size="w-5 h-5" box={20}><circle cx="10" cy="10" r="8" /><path stroke={BLUE} d="M2 13C-2 18 8 16 13 11S20 1 16 3M18 8c2 3-2 8-7 9" /></Icon>
      </button>
      <button aria-label="二维" className={`${tool}`}>
        <span className="w-5 h-5 border border-gray-600 rounded-sm text-[#1f6fe0] text-[8px] leading-3 pt-1.5 font-bold">2D</span>
      </button>
      <button aria-label="视图方向" className={tool}>
        <Icon size="w-5 h-5" box={20}><path d={cube} /><path stroke={BLUE} fill={PALE} d="M2 6l4-4h12l-4 4z" /></Icon>
      </button>
      <span className="h-2.5 flex items-center justify-center"><Caret /></span>
      <button aria-label="着色" className={tool}>
        <Icon size="w-5 h-5" box={20} color="text-[#2f6fc0]"><path fill={PALE} d={cube} /></Icon>
      </button>
      <span className="h-2.5 flex items-center justify-center"><Caret /></span>
      <button aria-label="全屏" className={tool}>
        <Icon size="w-5 h-5" box={20}><path d="M1 7V1h6M13 1h6v6M19 13v6h-6M7 19H1v-6" /></Icon>
      </button>
      <button aria-label="局部三维" className={tool}>
        <Icon size="w-5 h-5" box={20}><rect x="1" y="1" width="18" height="18" strokeDasharray="3 2" /><path stroke={BLUE} d="M10 4l5 3v6l-5 3-5-3V7zM5 7l5 3 5-3M10 10v6" /></Icon>
      </button>
      <span className="mx-1 my-0.5 border-t border-gray-600" />
      <button aria-label="显示设置" className={tool}>
        <Icon size="w-5 h-5" box={20}><path d="M10 19H1V1h18v10M5 6h1M8 6h8M5 10h1M8 10h6M5 14h3" /><ellipse stroke={BLUE} cx="15" cy="16" rx="4" ry="3" /><circle stroke={BLUE} cx="15" cy="16" r="1" /></Icon>
      </button>
    </div>
  );
};

/* ---------- Rebar table ---------- */

interface Bar {
  name: string;
  formula: string;
  desc: string;
  length: string;
  count: string;
  lap: string;
  unit: string;
  total: string;
}

const stdDesc = "层高-本层的露出长度-保护层";

const bars: Bar[] = [
  { name: "插筋.1", formula: "max(3900/6,600,500)+1*max(35*d, 500)+1.2*34*d", desc: "本层露出长度+错开距离+变截面纵筋的下锚固", length: "2545", count: "3", lap: "0", unit: "9.798", total: "29.394" },
  { name: "插筋.2", formula: "max(3900/6,600,500)+1.2*34*d", desc: "本层露出长度+变截面纵筋的下锚固", length: "1670", count: "2", lap: "0", unit: "6.43", total: "12.86" },
  { name: "角筋.1", formula: "3900-650-20", desc: stdDesc, length: "3230", count: "2", lap: "1", unit: "12.436", total: "24.872" },
  { name: "角筋.2", formula: "3900-1525-20", desc: stdDesc, length: "2355", count: "2", lap: "1", unit: "9.067", total: "18.134" },
  { name: "B边纵筋.1", formula: "3900-1525-20", desc: stdDesc, length: "2355", count: "2", lap: "1", unit: "9.067", total: "18.134" },
  { name: "B边纵筋.2", formula: "3900-650-20", desc: stdDesc, length: "3230", count: "2", lap: "1", unit: "12.436", total: "24.872" },
  { name: "H边纵筋.1", formula: "3900-650-20", desc: stdDesc, length: "3230", count: "2", lap: "1", unit: "12.436", total: "24.872" },
];

const barHeads = ["直径(mm)", "级别", "图号", "图形", "计算公式", "公式描述", "长度", "根数", "搭接", "损耗(%)", "单重(kg)", "总重(kg)", "钢筋归类"];

const EditToolbar: React.FC = () => (
  <div className="flex items-center h-7 shrink-0 border-b border-gray-300 pl-[5px] whitespace-nowrap">
    <div className="flex items-center gap-4 text-[#1f6fe0]">
      <button aria-label="首条" disabled><Icon color="text-gray-300"><path d="M2 2v12M13 2v12L6 8z" /></Icon></button>
      <button aria-label="上一条" disabled><Icon color="text-gray-300"><path d="M11 2v12L5 8z" /></Icon></button>
      <button aria-label="下一条"><Icon color="text-[#1f6fe0]"><path fill={PALE} d="M5 2v12l6-6z" /></Icon></button>
      <button aria-label="末条"><Icon color="text-[#1f6fe0]"><path fill={PALE} d="M3 2v12l7-6zM13 2v12" /></Icon></button>
    </div>
    <div className="flex items-center gap-3 ml-[15px]">
      <button aria-label="上移" disabled><Icon color="text-gray-300"><rect x="1" y="1" width="14" height="14" rx="1" /><path d="M8 12V4M5 7l3-3 3 3" /></Icon></button>
      <button aria-label="下移"><Icon><rect x="1" y="1" width="14" height="14" rx="1" /><path stroke={BLUE} d="M8 4v8M5 9l3 3 3-3" /></Icon></button>
    </div>
    <button className="flex items-center gap-1 ml-3"><Icon><path d="M9 3H1v6h8M1 13h9" /><path stroke={BLUE} d="M6 6h9M12 3l3 3-3 3" /></Icon>插入</button>
    <button className="flex items-center gap-1 ml-3"><Icon><path d="M1.500 4.500h13M3 5v9c0 1 1 1 1 1h8s1 0 1-1V5M5.500 4V1.500h5V4" /><path stroke="#d0302a" d="M6.500 8v4M9.500 8v4" /></Icon>删除</button>
    <button className="flex items-center gap-1 ml-2.5"><Icon><path d="M2 1v10M5 3v8M8 5v6M11 7v4M14 9v2" /><path stroke={BLUE} d="M1 14h14M3 12l-2 2 2 2M13 12l2 2-2 2" /></Icon>缩尺配筋</button>
    <button className="flex items-center gap-1 ml-3"><Icon><path d="M8 15H1V1h14v7M4 5h8M4 8h5M4 11h3" /><path stroke={BLUE} d="M12 8v7M9 11c1 4 5 4 6 0" /></Icon>钢筋信息</button>
    <button className="flex items-center gap-1 ml-3"><Icon><rect x="1" y="1" width="14" height="14" rx="1" /><path d="M4 4h4v4H4v4h4M11 6v6M8 9c0-3 5-3 5 0" /></Icon>钢筋图库</button>
    <button className="flex items-center gap-1.5 ml-3">其他<Caret className="text-gray-400" /></button>
    <span className="ml-2 h-[22px] leading-[22px] px-1 rounded-sm bg-[#d7e8fb]">单构件钢筋总重(kg)：322.352</span>
  </div>
);

const EditPanel: React.FC = () => (
  <section className="h-[422px] shrink-0 flex flex-col bg-white border-x border-b border-gray-300 overflow-hidden">
    <PanelStrip />
    <h2 className="h-[22px] shrink-0 bg-[#f0f0f0] border-b border-gray-300 pl-2 leading-[21px] text-gray-500">编辑钢筋</h2>
    <EditToolbar />
    <div className="flex flex-1 min-h-0 overflow-hidden">
      <table className="flex-1 table-fixed border-collapse self-start w-full">
        <colgroup>
          <col className="w-[13px]" /><col className="w-[73px]" /><col className="w-[56px]" /><col className="w-[36px]" />
          <col className="w-[32px]" /><col /><col className="w-[197px]" /><col className="w-[195px]" />
          <col className="w-[38px]" /><col className="w-[39px]" /><col className="w-[49px]" /><col className="w-[61px]" />
          <col className="w-[61px]" /><col className="w-[71px]" /><col className="w-[64px]" />
        </colgroup>
        <thead>
          <tr className="h-[21px] whitespace-nowrap">
            <th />
            <th className="p-0 bg-[#7fb9f9] text-white font-bold">筋号</th>
            {barHeads.map((h) => (
              <th key={h} className="p-0 font-normal border-r border-gray-300 last:border-r-0">{h}</th>
            ))}
          </tr>
        </thead>
        <tbody className="bg-[#c1dee0] text-black font-['Noto_Sans_Mono_CJK_SC','Liberation_Mono','Noto_Sans_CJK_SC',monospace] leading-[14px]">
          {bars.map((b, i) => (
            <tr key={b.name} className="h-[46px] *:border *:border-[#cfd9dc] *:p-0 *:pl-[2px] *:pb-1">
              <td className={`font-['Noto_Sans'] ${i === 0 ? "bg-[#7fb9f9] text-white" : "bg-[#f0f0f0] text-gray-700"}`}>{i + 1}</td>
              <td className={i === 0 ? "outline-2 -outline-offset-2 outline-gray-500" : ""}>{b.name}</td>
              <td>25</td>
              <td><span className="pl-1"><RebarMark /></span></td>
              <td>1</td>
              <td>
                <div className="ml-4 mr-1 border-b-2 border-black text-center text-[#e01020] pl-2 pb-1 mt-1">{b.length}</div>
              </td>
              <td>{b.formula}</td>
              <td><p className="pr-1.5 -mr-1">{b.desc}</p></td>
              <td>{b.length}</td>
              <td>{b.count}</td>
              <td>{b.lap}</td>
              <td>0</td>
              <td>{b.unit}</td>
              <td>{b.total}</td>
              <td>直筋</td>
            </tr>
          ))}
          <tr className="h-1"><td className="bg-[#f0f0f0]" /><td colSpan={14} /></tr>
        </tbody>
      </table>
      <div className="w-[13px] shrink-0 pl-[3px] pt-3.5"><div className="w-2 h-[202px] rounded-full bg-[#c8c8c8]" /></div>
    </div>
    <div className="flex items-center h-[13px] shrink-0 pl-1 pr-[18px]">
      <svg className="w-1 h-2" viewBox="0 0 4 8" fill="#555"><path d="M4 0v8L0 4z" /></svg>
      <div className="ml-1.5 h-2 w-[74%] rounded-full bg-[#c8c8c8]" />
      <svg className="w-1 h-2 ml-auto" viewBox="0 0 4 8" fill="#555"><path d="M0 0v8l4-4z" /></svg>
    </div>
  </section>
);

/* ---------- Display settings ---------- */

const floors = [
  { label: "第6层" }, { label: "第5层" }, { label: "第4层" }, { label: "第3层", on: true },
  { label: "第2层", on: true }, { label: "首层", on: true }, { label: "第-1层" }, { label: "基础层" },
];

const SettingsPanel: React.FC = () => (
  <aside className="w-[259px] shrink-0 flex flex-col bg-white border-l border-b border-gray-400 overflow-hidden">
    <PanelStrip closable={false} />
    <h2 className="h-[22px] shrink-0 bg-[#f0f0f0] border-b border-gray-300 pl-[7px] leading-[21px] text-gray-500">显示设置</h2>
    <div className="flex items-end gap-[3px] h-[27px] shrink-0 pl-0.5 border-b border-gray-400">
      <button className="w-[62px] h-[21px] bg-[#dedede] rounded-t-sm text-gray-600">图元显示</button>
      <button className="w-[60px] h-[23px] -mb-px bg-white border border-b-0 border-gray-400 rounded-t text-[#1f7fe8]">楼层显示</button>
    </div>
    <div className="flex gap-[22px] items-center h-[30px] shrink-0 pl-[7px] border-b border-gray-400 whitespace-nowrap text-black">
      {["当前楼层", "相邻楼层", "全部楼层"].map((r) => (
        <label key={r} className="flex items-center gap-[7px] shrink-0">
          <input
            type="radio"
            name="scope"
            defaultChecked={r === "相邻楼层"}
            className="appearance-none w-3.5 h-3.5 rounded-full border border-gray-500 checked:border-[#2f7de0] bg-white checked:bg-[radial-gradient(circle,#2f7de0_3px,#fff_4px)]"
          />
          {r}
        </label>
      ))}
    </div>
    <ul className="flex-1 min-h-0 pt-[3px] text-gray-500">
      <li className="flex items-center h-6 pl-[12px] gap-[7px]">
        <Caret className="text-gray-500" />
        <label className="flex items-center gap-[7px]"><CheckBox tone="muted" />全部楼层</label>
      </li>
      {floors.map((f) => (
        <li key={f.label} className="h-6 pl-[45px] flex items-center">
          <label className="flex items-center gap-[7px]"><CheckBox tone="muted" on={f.on} />{f.label}</label>
        </li>
      ))}
    </ul>
    <div className="h-[38px] shrink-0 border-t border-gray-400 flex items-center">
      <label className="flex items-center gap-[3px] pl-px"><CheckBox />其他区域图元亮显</label>
    </div>
  </aside>
);

const SideHandle: React.FC<{ dir: "left" | "right" }> = ({ dir }) => (
  <div className="w-1 shrink-0 bg-white pt-[159px]">
    <div className="h-[100px] bg-[#5c6470] flex items-center">
      <svg className="w-1 h-2" viewBox="0 0 4 8" fill="#c8ccd2"><path d={dir === "left" ? "M4 0v8L0 4z" : "M0 0v8l4-4z"} /></svg>
    </div>
  </div>
);

/* ---------- Status bar and taskbar ---------- */

const StatusBar: React.FC = () => {
  const btn = "h-[25px] border border-gray-400 rounded-sm flex items-center justify-center gap-1.5 text-gray-600";
  return (
    <footer className="flex items-center h-8 bg-[#fcfcfc] border-t border-gray-200 shrink-0 pl-0.5 whitespace-nowrap">
      <div className="flex w-[450px] shrink-0">
        <span className="w-10">层高：</span><span className="w-[50px]">3.9</span>
        <span className="w-10">标高：</span><span className="w-[99px]">5.37~9.27</span>
        <span className="w-[62px]">选中图元：</span><span className="w-[49px]">1(41)</span>
        <span className="w-[60px]">隐藏图元：</span><span>0</span>
      </div>
      <div className="flex gap-[3px]">
        <button aria-label="正交" className={`w-[25px] ${btn}`}><Icon><path d="M3 2v12h11M3 10h4v4" /></Icon></button>
        <button aria-label="捕捉" className="h-[25px] w-9 rounded-sm border border-[#3c7fd8] bg-[#d6e6fa] flex items-center justify-center gap-1.5"><Icon><rect x="2" y="2" width="13" height="13" rx="2" /><circle stroke={BLUE} cx="2.500" cy="2.500" r="2" /></Icon><Caret /></button>
        <button aria-label="交点" className={`w-[25px] ml-0.5 ${btn}`}><Icon color="text-gray-400"><path d="M1 1l14 14M15 1L1 15" /></Icon></button>
        <button aria-label="角度" className={`w-9 ml-0.5 ${btn}`}><Icon><path d="M11 2L2 14h13M6 9c2 1 2 3 2 5" /></Icon><Caret /></button>
        <button aria-label="输入" className={`w-9 ${btn}`}><Icon><path d="M1 4h6M4 1v6" /><path fill="currentColor" d="M6 11h9v3H6z" /></Icon><Caret /></button>
        <button aria-label="选择" className={`w-[25px] ${btn}`}><Icon><path fill="currentColor" d="M3 3h8v8H3z" /><path d="M1 1h12v10M1 1v12h9" /><path fill="currentColor" d="M11 9l4 4h-3l-1 2z" /></Icon></button>
        <button aria-label="折线" className={`w-[25px] ${btn}`}><Icon><path d="M2 14C3 8 3 5 6 4l8-2" /><path fill="currentColor" d="M9 9l5 3-3 2z" /></Icon></button>
      </div>
    </footer>
  );
};

const Taskbar: React.FC = () => {
  const app = "w-10 h-10 mx-[5px] flex items-center justify-center border-b-2 border-[#76b9ed] shrink-0";
  return (
    <footer className="flex h-10 bg-[#101010] shrink-0">
      <button aria-label="开始菜单" className="w-12 flex items-center justify-center shrink-0">
        <svg className="w-4 h-4" viewBox="0 0 16 16" fill="#fff"><path d="M0 2l7-1v6.500H0zM8 1l8-1v7.500H8zM0 8.500h7V15l-7-1zM8 8.500h8V16l-8-1z" /></svg>
      </button>
      <label className="w-[344px] h-full bg-[#f2f2f2] border border-gray-300 flex items-center pl-3 gap-3 shrink-0">
        <Icon size="w-4 h-4" color="text-gray-800"><circle cx="10" cy="6" r="5" /><path d="M6.500 9.500L1 15" /></Icon>
        <input aria-label="搜索" placeholder="在此键入进行搜索" className="flex-1 min-w-0 text-[14px] outline-none bg-transparent placeholder:text-gray-700" />
      </label>
      <div className="flex pl-0.5">
        <button aria-label="WPS" className={app}>
          <svg className="w-6 h-6" viewBox="0 0 24 24" fill="none" strokeWidth={4}><path d="M2 4l5 16L13 5" stroke="#f0322a" /><path d="M11 5l4 15L22 3" stroke="#ff5a2a" /></svg>
        </button>
        <button aria-label="GTJ" className="w-12 h-10 bg-[#333] flex items-center justify-center border-b-2 border-[#76b9ed] shrink-0">
          <span className="w-6 h-6 rounded bg-[#d8f2fd] flex items-center justify-center"><TLogo className="w-4 h-4" id="logo-task" /></span>
        </button>
        <button aria-label="文件资源管理器" className={app}>
          <svg className="w-[22px] h-5" viewBox="0 0 22 20"><path d="M0 2h8l2 3h12v13H0z" fill="#f5c242" /><path d="M0 7h22v11H0z" fill="#fbdb77" /><path d="M4 11h14v8h-4v-4H8v4H4z" fill="#3c9be0" /></svg>
        </button>
        <button aria-label="CAD" className={app}>
          <span className="w-6 h-[23px] bg-[#1763b5] border-2 border-[#a5bdd6] text-white text-[9px] leading-[19px] text-center">CAD</span>
        </button>
        <button aria-label="Glodon" className={app}>
          <svg className="w-6 h-6" viewBox="0 0 24 24"><path d="M22 1c-2 2-4 2-7 1C7-1 1 5 1 12c0 13 18 14 21 3 1-5-3-9-10-6 4 0 5 2 5 4-1 6-9 6-10 0-1-5 3-8 8-7 4 0 6-1 7-5z" fill="#22a3f0" /></svg>
        </button>
      </div>
      <div className="ml-auto flex items-center gap-2.5 text-white shrink-0">
        <Icon color="text-white" size="w-3.5 h-3.5"><path strokeWidth={1.500} d="M2 11l6-6 6 6" /></Icon>
        <Icon color="text-white" size="w-3.5 h-3.5"><path fill="#fff" d="M3 12V7c0-7 10-7 10 0v5l1 1H2zM7 15h2" /></Icon>
        <Icon color="text-white" size="w-3.5 h-3.5"><path d="M1 6h2l4-4v12l-4-4H1zM10 6l4 4M14 6l-4 4" /></Icon>
        <svg className="w-3.5 h-4" viewBox="0 0 14 16"><ellipse cx="7" cy="5" rx="4" ry="5" fill="#222" stroke="#888" /><ellipse cx="7" cy="11" rx="5" ry="4" fill="#fff" /><path d="M2 7h10v3H2z" fill="#e02020" /><path d="M5 5h4v2H5zM3 14h8v2H3z" fill="#f5a623" /></svg>
        <Icon color="text-white" size="w-4 h-4"><path d="M5 3h10v8H5zM8 15h5M10 11v4M1 1h3v4H1zM2.500 5v7h3" /></Icon>
        <span>中</span>
        <span className="w-4 h-4 ml-1 rounded-sm bg-[#f4511e] text-[13px] leading-4 text-center font-bold">S</span>
        <div className="w-[57px] ml-[7px] overflow-hidden whitespace-nowrap leading-[19px]">
          <div className="pl-[9px]">17:10:04</div>
          <div>2022-09-2</div>
        </div>
      </div>
    </footer>
  );
};

/* ---------- Red arrows drawn over the window ---------- */

interface ArrowProps { from: [number, number]; to: [number, number]; w?: number; head?: number }

const Arrow: React.FC<ArrowProps> = ({ from, to, w = 8, head = 18 }) => {
  const dx = to[0] - from[0];
  const dy = to[1] - from[1];
  const len = Math.hypot(dx, dy);
  const ux = dx / len;
  const uy = dy / len;
  const at = (back: number, side: number) => `${to[0] - ux * back - uy * side},${to[1] - uy * back + ux * side}`;
  const points = [
    `${from[0]},${from[1]}`,
    at(head * 0.85, w / 2),
    at(head, w),
    `${to[0]},${to[1]}`,
    at(head, -w),
    at(head * 0.85, -w / 2),
  ];
  return <polygon points={points.join(" ")} fill="#fb3a38" />;
};

const Annotations: React.FC = () => (
  <svg className="absolute inset-0 w-full h-full pointer-events-none" viewBox="0 0 1899 1077" preserveAspectRatio="none">
    <Arrow from={[1388, 471]} to={[960, 388]} w={9} />
    <Arrow from={[506, 877]} to={[63, 1020]} w={9} />
    <Arrow from={[674, 689]} to={[713, 672]} w={7} head={16} />
    <Arrow from={[692, 738]} to={[732, 712]} w={8} />
    <Arrow from={[656, 809]} to={[714, 763]} w={8} />
    <Arrow from={[613, 897]} to={[692, 823]} w={8} />
    <Arrow from={[626, 627]} to={[708, 898]} w={8} />
    <Arrow from={[678, 914]} to={[721, 968]} w={8} />
  </svg>
);

const App: React.FC = () => (
  <div className="relative h-screen flex flex-col overflow-hidden bg-white text-[12px] leading-4 text-gray-800 font-['Noto_Sans','Noto_Sans_CJK_SC',sans-serif]">
    <Header />
    <Ribbon />
    <ComboBar />
    <main className="flex flex-1 min-h-0">
      <NavPanel />
      <div className="w-[284px] shrink-0 pl-1 flex flex-col">
        <ComponentPanel />
        <PropertyPanel />
      </div>
      <SideHandle dir="left" />
      <div className="flex-1 min-w-0 flex flex-col">
        <div className="relative flex-1 min-h-0 bg-black overflow-hidden">
          <Scene />
          <DisplayDialog />
          <ViewTools />
        </div>
        <div className="h-1 shrink-0 bg-white flex justify-center">
          <div className="w-[100px] bg-[#5c6470] flex justify-center">
            <svg className="w-1.5 h-[3px]" viewBox="0 0 6 3" fill="#c8ccd2"><path d="M0 0h6L3 3z" /></svg>
          </div>
        </div>
        <EditPanel />
      </div>
      <SideHandle dir="right" />
      <SettingsPanel />
    </main>
    <StatusBar />
    <Taskbar />
    <Annotations />
  </div>
);

export default App;
